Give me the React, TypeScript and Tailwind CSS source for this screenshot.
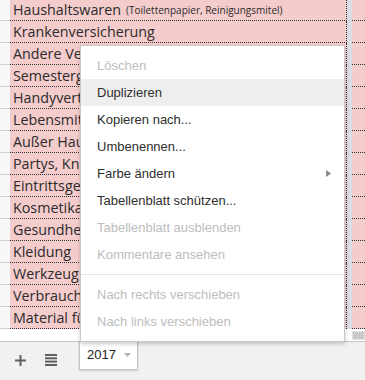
const rows = [
  "Haushaltswaren",
  "Krankenversicherung",
  "Andere Versicherungen",
  "Semestergebühren",
  "Handyvertrag",
  "Lebensmittel",
  "Außer Haus essen",
  "Partys, Kneipe",
  "Eintrittsgelder",
  "Kosmetika",
  "Gesundheit",
  "Kleidung",
  "Werkzeug",
  "Verbrauchsmaterial",
  "Material für Hobby",
];

type Item = { label: string; disabled?: boolean; active?: boolean; submenu?: boolean };

const groupA: Item[] = [
  { label: "Löschen", disabled: true },
  { label: "Duplizieren", active: true },
  { label: "Kopieren nach..." },
  { label: "Umbenennen..." },
  { label: "Farbe ändern", submenu: true },
  { label: "Tabellenblatt schützen..." },
  { label: "Tabellenblatt ausblenden", disabled: true },
  { label: "Kommentare ansehen", disabled: true },
];

const groupB: Item[] = [
  { label: "Nach rechts verschieben", disabled: true },
  { label: "Nach links verschieben", disabled: true },
];

const MenuRow = ({ item }: { item: Item }) => (
  <div
    className={`flex items-center justify-between h-[27px] pl-[16px] pr-[13px] text-[13px] ${
      item.active ? "bg-[#eeeeee]" : ""
    } ${item.disabled ? "text-[#bdbdbd]" : "text-[#2e2e2e]"}`}
  >
    <span>{item.label}</span>
    {item.submenu && (
      <svg width="5" height="7" viewBox="0 0 5 7">
        <path d="M0 0 L5 3.5 L0 7 Z" fill="#8a8a8a" />
      </svg>
    )}
  </div>
);

export default function App() {
  return (
    <div className="relative w-[365px] h-[380px] overflow-hidden bg-white">
      {/* grid */}
      <div className="flex flex-col -mt-px">
        {rows.map((r, i) => (
          <div key={r} className="flex h-[22px]">
            <div className="w-[10px] bg-[#f8f8f8] border-b border-[#d0d0d0]" />
            <div className="flex-1 flex items-center bg-[#f4cccc] border-b border-r border-dotted border-[#333] pl-[3px] whitespace-nowrap overflow-hidden font-['Open_Sans',sans-serif] text-[14.3px] text-[#2b2b2b]">
              {r}
              {i === 0 && (
                <span className="ml-[5px] text-[10px] pt-[2px]">(Toilettenpapier, Reinigungsmitel)</span>
              )}
            </div>
            <div className="w-[5px] bg-[#d9dde3]" />
            <div className="w-[13px] bg-[#f4cccc] border-b border-dotted border-[#333]" />
          </div>
        ))}
      </div>

      {/* horizontal scroll strip */}
      <div className="flex justify-end h-[12px] bg-white">
        <div className="w-[13px] mt-[2px] h-[9px] bg-[#c9c9c9] border border-[#e2e2e2]" />
      </div>

      {/* sheet bar */}
      <div className="flex items-start h-[40px] bg-[#f1f1f1] border-t border-[#c4c4c4]">
        <div className="flex items-center h-[36px] gap-[19px] pl-[15px] pr-[22px]">
          <svg width="11" height="11" viewBox="0 0 11 11">
            <rect x="0" y="4.5" width="11" height="2" fill="#616161" />
            <rect x="4.5" y="0" width="2" height="11" fill="#616161" />
          </svg>
          <svg width="12" height="12" viewBox="0 0 12 12">
            <rect x="0" y="0" width="12" height="2" fill="#616161" />
            <rect x="0" y="3.3" width="12" height="2" fill="#616161" />
            <rect x="0" y="6.6" width="12" height="2" fill="#616161" />
            <rect x="0" y="10" width="12" height="2" fill="#616161" />
          </svg>
        </div>
        <div className="-mt-px flex items-center gap-[8px] w-[59px] h-[29px] pl-[7px] bg-white border-x border-b border-[#c4c4c4] shadow-[0_1px_2px_rgba(0,0,0,0.15)] font-['Liberation_Sans',Arial,sans-serif] text-[13px] text-[#222]">
          <span>2017</span>
          <svg width="7" height="4" viewBox="0 0 7 4">
            <path d="M0 0 L7 0 L3.5 4 Z" fill="#b0b0b0" />
          </svg>
        </div>
      </div>

      {/* context menu */}
      <div className="absolute left-[80px] top-[45px] w-[265px] bg-white border border-[#c8c8c8] shadow-[0_2px_4px_rgba(0,0,0,0.2)] py-[6px] font-['Liberation_Sans',Arial,sans-serif]">
        {groupA.map((it) => (
          <MenuRow key={it.label} item={it} />
        ))}
        <div className="my-[6px] h-px bg-[#e5e5e5]" />
        {groupB.map((it) => (
          <MenuRow key={it.label} item={it} />
        ))}
      </div>
    </div>
  );
}
